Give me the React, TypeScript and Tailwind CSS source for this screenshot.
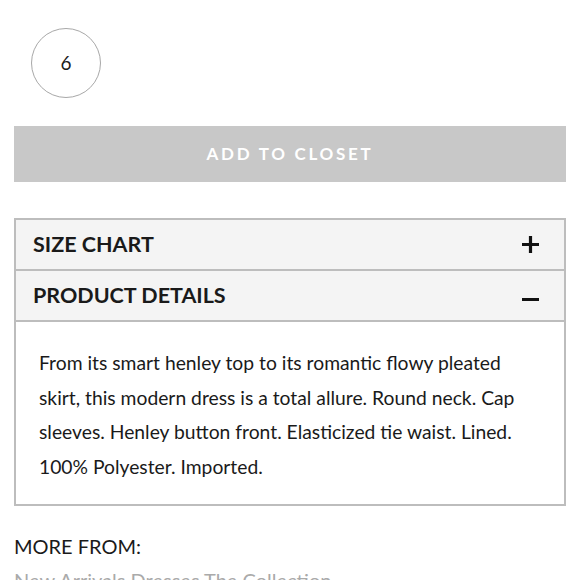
export default function App() {
  return (
    <div className="w-[580px] h-[580px] overflow-hidden bg-white px-[14px] font-['Lato',sans-serif] text-[#1a1a1a]">
      <div className="pt-[28px] pl-[17px]">
        <div className="w-[70px] h-[70px] rounded-full border border-[#a8a8a8] flex items-center justify-center text-[19px]">
          6
        </div>
      </div>

      <button className="mt-[28px] w-full h-[56px] bg-[#c8c8c8] text-white text-[17px] font-bold tracking-[0.16em] flex items-center justify-center">
        ADD TO CLOSET
      </button>

      <div className="mt-[36px] border-2 border-[#bdbdbd]">
        <div className="h-[51px] bg-[#f4f4f4] border-b-2 border-[#bdbdbd] flex items-center justify-between pl-[17px] pr-[24px]">
          <span className="text-[21.5px] font-bold">SIZE CHART</span>
          <svg width="19" height="19" viewBox="0 0 19 19">
            <path d="M9.5 1v17M1 9.5h17" stroke="#111" strokeWidth="3.2" />
          </svg>
        </div>
        <div className="h-[51px] bg-[#f4f4f4] border-b-2 border-[#bdbdbd] flex items-center justify-between pl-[17px] pr-[24px]">
          <span className="text-[21.5px] font-bold">PRODUCT DETAILS</span>
          <svg width="19" height="19" viewBox="0 0 19 19" className="mt-[8px]">
            <path d="M1 9.5h17" stroke="#111" strokeWidth="3" />
          </svg>
        </div>
        <p className="px-[23px] pt-[24px] pb-[20px] text-[19.3px] leading-[34.5px]">
          From its smart henley top to its romantic flowy pleated
          <br />
          skirt, this modern dress is a total allure. Round neck. Cap
          <br />
          sleeves. Henley button front. Elasticized tie waist. Lined.
          <br />
          100% Polyester. Imported.
        </p>
      </div>

      <div className="mt-[26px] text-[20px] leading-[28px]">MORE FROM:</div>
      <div className="mt-[6px] text-[20px] leading-[28px] text-[#aaa]">New Arrivals Dresses The Collection</div>
    </div>
  );
}
